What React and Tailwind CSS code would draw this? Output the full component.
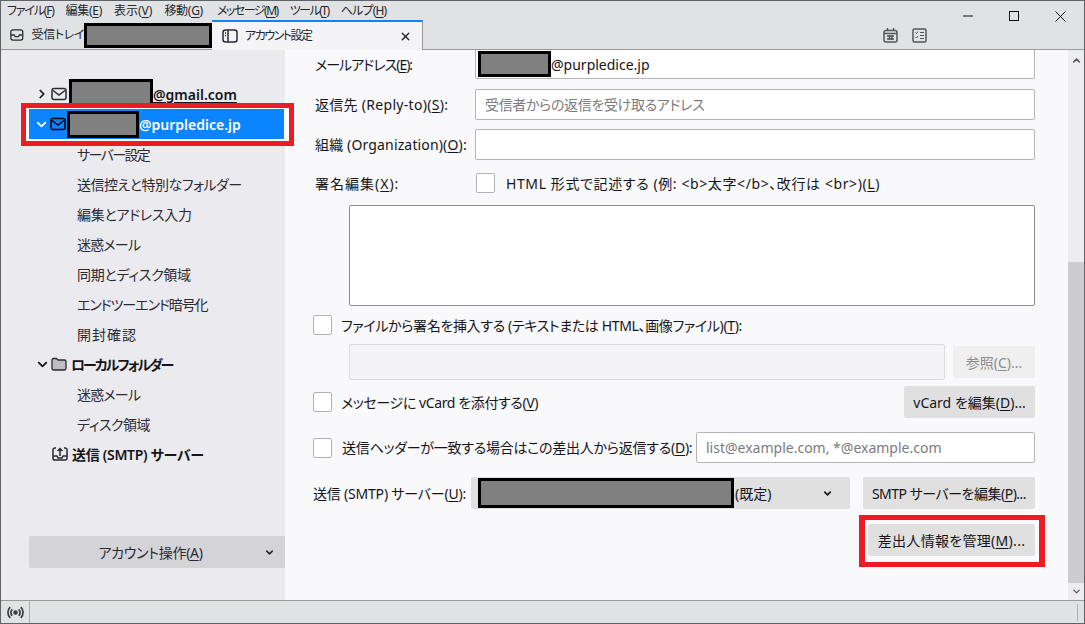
import React from 'react'
import { ChevronRight, ChevronDown, ChevronUp, X } from 'lucide-react'

const Redact = ({ className = '' }) => (
  <span className={`inline-block shrink-0 bg-[#808080] border-[3px] border-black ${className}`} />
)

const Key = ({ children }) => <span className="underline underline-offset-2">{children}</span>

const MailIcon = ({ className = '' }) => (
  <svg width="16" height="14" viewBox="0 0 16 14" fill="none" stroke="currentColor" strokeWidth="1.5" className={className}>
    <rect x="1" y="1.5" width="14" height="11" rx="2" />
    <path d="M2 3.5 8 8l6-4.5" />
  </svg>
)

const SubItem = ({ className = '', children }) => (
  <div className={`h-[30px] flex items-center pl-[76px] text-[#2b2a33] ${className}`}>{children}</div>
)

const Sidebar = () => (
  <div className="w-[284px] shrink-0 bg-[#ebebef] flex flex-col pt-[29px] text-[14px]">
    <div className="h-[30px] flex items-center pl-[34px] font-semibold text-[#15141a]">
      <ChevronRight size={14} strokeWidth={3} />
      <MailIcon className="ml-[2px] text-[#2b2a33]" />
      <Redact className="w-[84px] h-[29px] ml-[2px] -mt-[1px]" />
      <span className="underline underline-offset-2 decoration-1">@gmail.com</span>
    </div>
    <div className="h-[30px] ml-[28px] pl-[5px] flex items-center bg-[#0a84ff] text-white font-semibold">
      <ChevronDown size={15} strokeWidth={3} />
      <MailIcon className="ml-[1px] text-black" />
      <Redact className="w-[72px] h-[27px] ml-[1px]" />
      <span>@purpledice.jp</span>
    </div>
    <SubItem className="tracking-[-1.6px]">サーバー設定</SubItem>
    <SubItem className="tracking-[-0.5px]">送信控えと特別なフォルダー</SubItem>
    <SubItem className="tracking-[-0.3px]">編集とアドレス入力</SubItem>
    <SubItem className="tracking-[-0.8px]">迷惑メール</SubItem>
    <SubItem className="tracking-[-0.3px]">同期とディスク領域</SubItem>
    <SubItem className="tracking-[-1.1px]">エンドツーエンド暗号化</SubItem>
    <SubItem className="tracking-[1px]">開封確認</SubItem>
    <div className="h-[30px] flex items-center pl-[34px] font-semibold text-[#15141a]">
      <ChevronDown size={15} strokeWidth={3} />
      <svg width="16" height="14" viewBox="0 0 16 14" className="ml-[1px] mr-[4px]" stroke="#2b2a33" strokeWidth="1.3" fill="#bdbdc2">
        <path d="M1 3a1.5 1.5 0 0 1 1.500-1.500h3L7 3h6.500A1.500 1.500 0 0 1 15 4.500v7a1.500 1.500 0 0 1-1.500 1.500h-11A1.500 1.500 0 0 1 1 11.500z" />
      </svg>
      <span className="tracking-[-2px]">ローカルフォルダー</span>
    </div>
    <SubItem className="tracking-[-0.8px]">迷惑メール</SubItem>
    <SubItem className="tracking-[-0.5px]">ディスク領域</SubItem>
    <div className="h-[30px] flex items-center pl-[51px] font-semibold text-[#15141a]">
      <svg width="16" height="16" viewBox="0 0 16 16" fill="none" stroke="#2b2a33" strokeWidth="1.5" className="mr-[4px]">
        <path d="M4 2H2.800A1.800 1.800 0 0 0 1 3.800v8.400A1.800 1.800 0 0 0 2.800 14h10.400a1.800 1.800 0 0 0 1.800-1.800V3.800A1.800 1.800 0 0 0 13.200 2H12" />
        <path d="M8 10V3M5.500 5 8 2.500 10.500 5M1 10h4l1 2h4l1-2h4" />
      </svg>
      <span className="tracking-[-0.3px]">送信 (SMTP) サーバー</span>
    </div>
    <div className="mt-[67px] ml-[28px] h-[32px] bg-[#d3d3d8] rounded-l-[2px] flex items-center text-[#2b2a33] pr-[10px]">
      <span className="flex-1 text-center pl-[8px] tracking-[-0.3px]">アカウント操作(<Key>A</Key>)</span>
      <ChevronDown size={11} strokeWidth={3.5} />
    </div>
  </div>
)

const TextBox = ({ className = '', children }) => (
  <div className={`h-[31px] bg-white border border-[#b5b5b5] rounded-[2px] flex items-center px-[9px] ${className}`}>{children}</div>
)

const Check = ({ className = '' }) => (
  <span className={`inline-block w-[19px] h-[20px] shrink-0 bg-white border border-[#b1b1b1] rounded-[2px] ${className}`} />
)

const Btn = ({ className = '', children }) => (
  <div className={`h-[32px] bg-[#e0e0e0] rounded-[2px] flex items-center justify-center shrink-0 ${className}`}>{children}</div>
)

const Content = () => (
  <div className="flex-1 min-w-0 bg-[#f9f9fb] text-[14px] text-[#15141a] flex flex-col pl-[28px] pr-[33px]">
    <div className="h-[29px] flex items-center">
      <span className="w-[162px] shrink-0 pl-[2px] tracking-[-1px]">メールアドレス(<Key>E</Key>):</span>
      <div className="flex-1 h-full bg-white border border-t-0 border-[#b5b5b5] rounded-b-[2px] flex items-center pl-[2px]">
        <Redact className="w-[73px] h-[26px]" />
        <span>@purpledice.jp</span>
      </div>
    </div>
    <div className="mt-[10px] flex items-center">
      <span className="w-[162px] shrink-0 pl-[2px] tracking-[0.3px]">返信先 (Reply-to)(<Key>S</Key>):</span>
      <TextBox className="flex-1 text-[#7b7b80] tracking-[-0.35px]">受信者からの返信を受け取るアドレス</TextBox>
    </div>
    <div className="mt-[9px] flex items-center">
      <span className="w-[162px] shrink-0 pl-[2px] tracking-[0.15px]">組織 (Organization)(<Key>O</Key>):</span>
      <TextBox className="flex-1" />
    </div>
    <div className="mt-[13px] h-[20px] flex items-center">
      <span className="w-[163px] shrink-0 pl-[2px] tracking-[1px]">署名編集(<Key>X</Key>):</span>
      <Check />
      <span className="ml-[11px] tracking-[0.6px]">HTML 形式で記述する (例: &lt;b&gt;太字&lt;/b&gt;、改行は &lt;br&gt;)(<Key>L</Key>)</span>
    </div>
    <div className="mt-[12px] ml-[36px] h-[101px] bg-white border border-[#8f8f8f] rounded-[2px]" />
    <div className="mt-[9px] h-[20px] flex items-center">
      <Check />
      <span className="ml-[9px] tracking-[-0.35px]">ファイルから署名を挿入する (テキストまたは HTML、画像ファイル)(<Key>T</Key>):</span>
    </div>
    <div className="mt-[9px] ml-[36px] flex items-center">
      <div className="flex-1 h-[36px] bg-[#f4f4f6] border border-[#dcdcdc] rounded-[2px]" />
      <Btn className="ml-[8px] w-[82px] h-[31px] bg-[#efefef] text-[#8b8b8f]">参照(<Key>C</Key>)...</Btn>
    </div>
    <div className="mt-[6px] flex items-center">
      <Check />
      <span className="ml-[9px] flex-1 tracking-[-0.4px]">メッセージに vCard を添付する(<Key>V</Key>)</span>
      <Btn className="w-[131px]">vCard を編集(<Key>D</Key>)...</Btn>
    </div>
    <div className="mt-[14px] flex items-center">
      <Check />
      <span className="ml-[10px] flex-1 tracking-[-0.25px]">送信ヘッダーが一致する場合はこの差出人から返信する(<Key>D</Key>):</span>
      <TextBox className="w-[339px] text-[#7b7b80]">list@example.com, *@example.com</TextBox>
    </div>
    <div className="mt-[14px] flex items-center">
      <span className="w-[158px] shrink-0 tracking-[-0.2px]">送信 (SMTP) サーバー(<Key>U</Key>):</span>
      <div className="w-[379px] h-[32px] bg-[#e0e0e0] rounded-[2px] flex items-center pl-[7px] pr-[17px]">
        <Redact className="w-[256px] h-[30px]" />
        <span className="ml-[1px] flex-1">(既定)</span>
        <ChevronDown size={11} strokeWidth={3.500} />
      </div>
      <Btn className="ml-auto w-[172px] tracking-[-0.5px]">SMTP サーバーを編集(<Key>P</Key>)...</Btn>
    </div>
    <div className="mt-[15px] flex justify-end">
      <Btn className="w-[167px] tracking-[0.3px]">差出人情報を管理(<Key>M</Key>)...</Btn>
    </div>
  </div>
)

const Scrollbar = () => (
  <div className="w-[16px] shrink-0 bg-[#ededed] flex flex-col items-center">
    <ChevronUp size={11} strokeWidth={3.500} className="text-[#5a5a5a] mt-[5px]" />
    <div className="w-full mt-[196px] bg-[#cdcdcd] flex-1" />
    <ChevronDown size={11} strokeWidth={3} className="text-[#5a5a5a] my-[3px]" />
  </div>
)

export default function App() {
  return (
    <div
      className="relative w-[1085px] h-[624px] overflow-hidden bg-[#e1e2e4] border border-[#5f6368] flex flex-col whitespace-nowrap [font-feature-settings:'palt']"
      style={{ fontFamily: '"Noto Sans", "Noto Sans CJK JP", sans-serif' }}
    >
      {/* title bar and menu */}
      <div className="h-[19px] flex items-center pl-[6px] pr-[18px] text-[12px] text-[#26262b] shrink-0">
        <div className="flex gap-[12px]">
          <span className="tracking-[-1.2px]">ファイル(<Key>F</Key>)</span>
          <span className="tracking-[-0.3px]">編集(<Key>E</Key>)</span>
          <span>表示(<Key>V</Key>)</span>
          <span className="tracking-[-0.3px]">移動(<Key>G</Key>)</span>
          <span className="tracking-[-1.5px] ml-[2px]">メッセージ(<Key>M</Key>)</span>
          <span className="tracking-[-1.5px]">ツール(<Key>T</Key>)</span>
          <span className="tracking-[-0.8px]">ヘルプ(<Key>H</Key>)</span>
        </div>
        <div className="ml-auto flex items-center gap-[36px] mt-[11px] text-[#111]">
          <svg width="10" height="10" viewBox="0 0 10 10" stroke="currentColor" strokeWidth="1"><path d="M0 5h10" /></svg>
          <svg width="10" height="10" viewBox="0 0 10 10" fill="none" stroke="currentColor" strokeWidth="1"><rect x=".5" y=".5" width="9" height="9" /></svg>
          <svg width="11" height="11" viewBox="0 0 11 11" stroke="currentColor" strokeWidth="1"><path d="M.5.5l10 10M10.500.5l-10 10" /></svg>
        </div>
      </div>
      {/* tabs */}
      <div className="h-[30px] flex items-end pl-[9px] border-b border-[#9a9a9e] shrink-0 text-[12px] text-[#26262b]">
        <div className="h-[28px] flex items-center w-[202px]">
          <svg width="16" height="14" viewBox="0 0 16 14" fill="none" stroke="#2b2a33" strokeWidth="1.500">
            <rect x="1" y="1" width="14" height="12" rx="2.500" />
            <path d="M1 7h4l1 2h4l1-2h4" />
          </svg>
          <span className="ml-[8px] tracking-[-0.4px]">受信トレイ</span>
          <Redact className="w-[128px] h-[25px]" />
        </div>
        <div className="h-[30px] w-[211px] -mb-[1px] bg-[#f4f4f6] border-t-2 border-[#0a84ff] border-r border-r-[#9a9a9e] flex items-center pl-[10px] pr-[10px]">
          <svg width="16" height="14" viewBox="0 0 16 14" fill="none" stroke="#2b2a33" strokeWidth="1.500">
            <rect x="1" y="1" width="14" height="12" rx="2.500" />
            <path d="M6 1v12M3 4h1M3 6.500h1" />
          </svg>
          <span className="ml-[7px] flex-1 tracking-[-1.5px]">アカウント設定</span>
          <X size={13} strokeWidth={2.500} />
        </div>
        <div className="ml-[460px] h-[28px] flex items-center gap-[14px]">
          <svg width="15" height="15" viewBox="0 0 15 15" fill="none" stroke="#55555a" strokeWidth="1.500">
            <rect x="1" y="2.500" width="13" height="11.500" rx="2" />
            <path d="M4.500 0v3M10.500 0v3M1 5.500h13M4 8h7M4 11h7M6.500 7v5M9 7v5" />
          </svg>
          <svg width="15" height="15" viewBox="0 0 15 15" fill="none" stroke="#55555a" strokeWidth="1.500">
            <rect x="1" y="1" width="13" height="13" rx="1.500" />
            <path d="M3.500 4.500l1 1 1.500-2M3.500 9l1 1 1.500-2M8 4.500h4M8 7.500h4M8 10.500h4" strokeWidth="1" />
          </svg>
        </div>
      </div>
      {/* body */}
      <div className="flex-1 flex min-h-0">
        <Sidebar />
        <Content />
        <Scrollbar />
      </div>
      {/* status bar */}
      <div className="h-[23px] border-t border-[#9a9a9e] flex items-center shrink-0">
        <div className="w-[29px] h-full border-r border-[#b0b0b0] flex items-center justify-center">
          <svg width="17" height="13" viewBox="0 0 16 12" fill="none" stroke="#3a3a3f" strokeWidth="1.600">
            <circle cx="8" cy="6" r="1.300" fill="#3a3a3f" />
            <path d="M5 3a4 4 0 0 0 0 6M11 3a4 4 0 0 1 0 6M3 1a7 7 0 0 0 0 10M13 1a7 7 0 0 1 0 10" />
          </svg>
        </div>
        <div className="ml-auto mr-[6px] h-[17px] border-l border-[#b0b0b0]" />
      </div>
      {/* annotation frames */}
      <div className="absolute left-[20px] top-[102px] w-[273px] h-[43px] border-[5px] border-[#ed1c24]">
        <div className="h-full border-l-[3px] border-t border-b-2 border-r-[5px] border-white" />
      </div>
      <div className="absolute left-[858px] top-[514px] w-[186px] h-[52px] border-y-[5px] border-x-[6px] border-[#ed1c24]" />
    </div>
  )
}
